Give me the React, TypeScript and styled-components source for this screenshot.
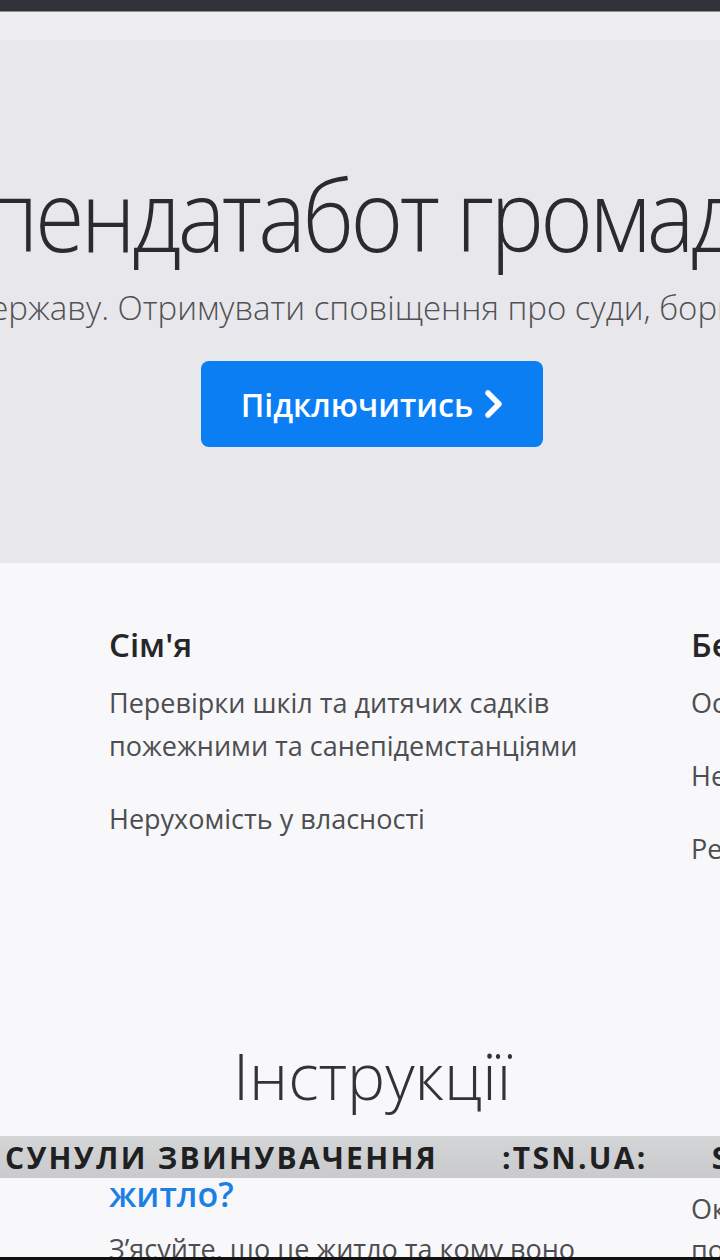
import React from "react";
import styled, { createGlobalStyle } from "styled-components";

const GlobalStyle = createGlobalStyle`
  body {
    margin: 0;
    background: #f8f8fa;
    font-family: "Open Sans", "Noto Sans", sans-serif;
    -webkit-font-smoothing: antialiased;
  }
`;

const Screen = styled.div`
  position: relative;
  width: 720px;
  height: 1260px;
  overflow: hidden;
  display: flex;
  flex-direction: column;
  background: #f8f8fa;
`;

const TopBar = styled.div`
  flex: none;
  height: 11px;
  background: #30343a;
  border-bottom: 1px solid #8a8d92;
`;

// the site is wider than the visible frame, the frame only shows its middle
const Site = styled.div`
  flex: none;
  width: 1746px;
  margin-left: -501px;
  display: flex;
  flex-direction: column;
`;

const BrowserStrip = styled.div`
  height: 28px;
  background: #eeeef1;
`;

const Hero = styled.section`
  height: 523px;
  background: #e8e8ec;
  display: flex;
  flex-direction: column;
  align-items: center;
  padding-top: 141px;
  box-sizing: border-box;
`;

// the heading font on the shot is a narrow light face
const Title = styled.h1`
  margin: 0;
  padding-left: 14px;
  font-family: "Open Sans", "Noto Sans", sans-serif;
  font-weight: 300;
  font-size: 100px;
  line-height: 64px;
  letter-spacing: -4px;
  color: #2b2b2d;
  white-space: nowrap;
  transform: scaleX(0.9);
`;

const Lead = styled.p`
  margin: 43px 0 0;
  font-weight: 300;
  font-size: 33px;
  line-height: 40px;
  color: #505154;
  white-space: nowrap;
`;

const CtaButton = styled.button`
  margin-top: 33px;
  width: 342px;
  height: 86px;
  border: none;
  border-radius: 8px;
  background: #0b7ef4;
  color: #fff;
  font-family: "Open Sans", "Noto Sans", sans-serif;
  font-size: 32px;
  font-weight: 600;
  display: flex;
  align-items: center;
  justify-content: center;
  gap: 10px;
  padding: 0 0 0 2px;
  cursor: pointer;
`;

const Features = styled.section`
  display: grid;
  grid-template-columns: repeat(3, 582px);
  padding: 60px 0 0 28px;
`;

const Column = styled.div`
  display: flex;
  flex-direction: column;
`;

const ColumnTitle = styled.h3`
  margin: 0 0 14px;
  font-size: 33px;
  line-height: 44px;
  font-weight: 600;
  color: #262628;
`;

const Item = styled.p`
  margin: 0 0 30px;
  font-size: 27px;
  line-height: 43px;
  color: #4d4e51;
  max-width: 530px;
`;

const SectionTitle = styled.h2`
  margin: 136px 0 0;
  text-align: center;
  font-weight: 300;
  font-size: 64px;
  line-height: 80px;
  color: #333336;
`;

const Guides = styled.section`
  display: grid;
  grid-template-columns: repeat(3, 582px);
  padding: 18px 0 0 28px;
`;

const GuideTitle = styled.h4`
  margin: 0 0 14px;
  font-size: 34px;
  line-height: 40px;
  font-weight: 600;
  color: #1c7fe6;
  white-space: pre-line;
`;

const GuideText = styled.p`
  margin: 0;
  font-size: 27px;
  line-height: 41px;
  color: #4d4e51;
  max-width: 500px;
  white-space: pre-line;
`;

const Ticker = styled.div`
  position: absolute;
  left: 0;
  right: 0;
  top: 1136px;
  height: 42px;
  background: linear-gradient(#d4d5d7, #c9cacc);
  display: flex;
  align-items: center;
  gap: 64px;
  padding-left: 5px;
  font-family: "Open Sans", "Noto Sans", sans-serif;
  font-weight: 700;
  font-size: 30px;
  letter-spacing: 2.3px;
  color: #1f2022;
  white-space: nowrap;
`;

const BottomBar = styled.div`
  position: absolute;
  left: 0;
  right: 0;
  bottom: 0;
  height: 3px;
  background: #111;
`;

const columns = [
  {
    title: "Фінанси",
    items: [
      "Податкові борги та штрафи",
      "Виконавчі провадження",
      "Судові справи, де ви є учасниками",
    ],
  },
  {
    title: "Сім'я",
    items: [
      "Перевірки шкіл та дитячих садків пожежними та санепідемстанціями",
      "Нерухомість у власності",
    ],
  },
  {
    title: "Безпека",
    items: ["Особисті документи", "Несплачені штрафи", "Реєстр боржників"],
  },
];

const guides = [
  {
    title: "Як перевірити\nкомпанію?",
    text: "Дізнайтесь про власників, борги та судові справи",
  },
  {
    title: "Як перевірити\nжитло?",
    text: "З’ясуйте, що це житло та кому воно належить",
  },
  {
    title: "Як захистити дані?",
    text: "Окремо перевірте власника та\nподаткові борги",
  },
];

const Chevron = () => (
  <svg width="22" height="30" viewBox="0 0 22 30" fill="none">
    <path
      d="M5 4 L16 15 L5 26"
      stroke="#fff"
      strokeWidth="5.5"
      strokeLinecap="round"
      strokeLinejoin="round"
    />
  </svg>
);

export default function App() {
  return (
    <>
      <GlobalStyle />
      <Screen>
        <TopBar />
        <Site>
          <BrowserStrip />
          <Hero>
            <Title>Опендатабот громадам</Title>
            <Lead>
              Контролюй державу. Отримувати сповіщення про суди, борги та
              перевірки
            </Lead>
            <CtaButton>
              Підключитись <Chevron />
            </CtaButton>
          </Hero>

          <Features>
            {columns.map((c) => (
              <Column key={c.title}>
                <ColumnTitle>{c.title}</ColumnTitle>
                {c.items.map((i) => (
                  <Item key={i}>{i}</Item>
                ))}
              </Column>
            ))}
          </Features>

          <SectionTitle>Інструкції</SectionTitle>

          <Guides>
            {guides.map((g) => (
              <Column key={g.title}>
                <GuideTitle>{g.title}</GuideTitle>
                <GuideText>{g.text}</GuideText>
              </Column>
            ))}
          </Guides>
        </Site>

        <Ticker>
          <span>СУНУЛИ ЗВИНУВАЧЕННЯ</span>
          <span>:TSN.UA:</span>
          <span>SPORT</span>
        </Ticker>
        <BottomBar />
      </Screen>
    </>
  );
}
